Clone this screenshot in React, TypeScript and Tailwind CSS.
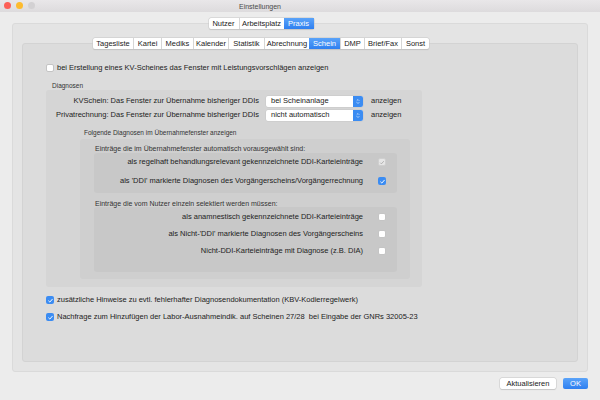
import React from 'react';

const FONT = { fontFamily: '"Liberation Sans", Arial, sans-serif' };

const Box = ({ checked, disabled }: { checked?: boolean; disabled?: boolean }) => {
  if (!checked) {
    return <div className="w-[8px] h-[8px] shrink-0 rounded-[2px] bg-white border border-[#c4c4c4]" />;
  }
  return (
    <div
      className={`w-[8px] h-[8px] shrink-0 rounded-[2px] flex items-center justify-center ${
        disabled ? 'bg-[#e6e6e6] border border-[#cfcfcf]' : 'bg-[#3b8cf2]'
      }`}
    >
      <svg viewBox="0 0 8 8" className="w-[7px] h-[7px]">
        <path d="M1.6 4.2 L3.2 5.8 L6.4 2.2" fill="none" stroke={disabled ? '#a8a8a8' : '#ffffff'} strokeWidth="1.1" />
      </svg>
    </div>
  );
};

const Select = ({ value }: { value: string }) => (
  <div className="w-[97px] h-[11px] bg-white rounded-[2px] shadow-[0_0_0_0.5px_#c8c8c8] flex items-center">
    <span className="flex-1 pl-[5px] text-[7.5px] text-[#222] leading-none">{value}</span>
    <div className="w-[10px] h-[11px] rounded-r-[2px] bg-[#3b8cf2] flex items-center justify-center">
      <svg viewBox="0 0 6 9" className="w-[4px] h-[7px]">
        <path d="M1 3.5 L3 1.5 L5 3.5 M1 5.5 L3 7.5 L5 5.5" fill="none" stroke="#fff" strokeWidth="0.9" />
      </svg>
    </div>
  </div>
);

const Tabs = ({ items, active }: { items: [string, number][]; active: string }) => (
  <div className="flex h-[11px] bg-white rounded-[2px] shadow-[0_0_0_0.5px_#c9c9c9,0_0.5px_1px_rgba(0,0,0,0.15)]">
    {items.map(([label, w], i) => (
      <div
        key={label}
        style={{ width: w }}
        className={`flex items-center justify-center text-[7.5px] leading-none ${
          label === active
            ? 'bg-gradient-to-b from-[#5aa3f9] to-[#2e7ff0] text-white'
            : 'text-[#222]'
        } ${i > 0 && label !== active ? 'border-l border-[#d6d6d6]' : ''}`}
      >
        {label}
      </div>
    ))}
  </div>
);

const SubRow = ({ label, checked, disabled }: { label: string; checked?: boolean; disabled?: boolean }) => (
  <div className="h-[12px] flex items-center justify-end pr-[11px] gap-[15px]">
    <span className="text-[7.5px] text-[#222] leading-none">{label}</span>
    <Box checked={checked} disabled={disabled} />
  </div>
);

export default function App() {
  return (
    <div className="w-[600px] h-[400px] bg-[#ececec] flex flex-col overflow-hidden" style={FONT}>
      {/* title bar */}
      <div className="h-[12px] shrink-0 bg-gradient-to-b from-[#e9e7e9] to-[#dddbdd] relative flex items-center justify-center pr-[80px]">
        <div className="absolute left-[4px] top-[2px] flex gap-[5px]">
          <div className="w-[7px] h-[7px] rounded-full bg-[#fc5f57]" />
          <div className="w-[7px] h-[7px] rounded-full bg-[#fdbb2e]" />
          <div className="w-[7px] h-[7px] rounded-full bg-[#d3d1d3]" />
        </div>
        <span className="text-[7px] text-[#4a4a4a] leading-none">Einstellungen</span>
      </div>

      <div className="px-[12px] pt-[6px] flex flex-col">
        <div className="flex justify-center pr-[78px] relative z-10">
          <Tabs items={[['Nutzer', 30], ['Arbeitsplatz', 45], ['Praxis', 30]]} active="Praxis" />
        </div>

        {/* outer panel */}
        <div className="-mt-[6px] h-[349px] bg-[#e4e4e4] border border-[#dadada] rounded-[3px] px-[9px] pt-[14px]">
          <div className="flex justify-center pr-[78px] relative z-10">
            <Tabs
              items={[
                ['Tagesliste', 40],
                ['Kartei', 28],
                ['Mediks', 32],
                ['Kalender', 35],
                ['Statistik', 36],
                ['Abrechnung', 45],
                ['Schein', 31],
                ['DMP', 24],
                ['Brief/Fax', 37],
                ['Sonst', 28],
              ]}
              active="Schein"
            />
          </div>

          {/* inner panel */}
          <div className="-mt-[6px] h-[319px] bg-[#dcdcdc] border border-[#d3d3d3] rounded-[3px] pl-[23px] pt-[19px]">
            <div className="h-[10px] flex items-center gap-[3px]">
              <Box />
              <span className="text-[7.5px] text-[#222] leading-none">
                bei Erstellung eines KV-Scheines das Fenster mit Leistungsvorschlägen anzeigen
              </span>
            </div>

            <div className="mt-[9px] h-[8px] flex items-center pl-[6px] text-[6.5px] text-[#333] leading-none">
              Diagnosen
            </div>

            {/* Diagnosen box */}
            <div className="w-[376px] bg-[#d5d5d5] rounded-[3px] pt-[5px] pb-[8px]">
              <div className="flex flex-col gap-[2px]">
                <div className="h-[12px] flex items-center">
                  <span className="w-[213px] text-right text-[7.5px] text-[#222] leading-none whitespace-nowrap">
                    KVSchein: Das Fenster zur Übernahme bisheriger DDIs
                  </span>
                  <div className="ml-[7px]">
                    <Select value="bei Scheinanlage" />
                  </div>
                  <span className="ml-[8px] text-[7.5px] text-[#222] leading-none">anzeigen</span>
                </div>
                <div className="h-[12px] flex items-center">
                  <span className="w-[213px] text-right text-[7.5px] text-[#222] leading-none whitespace-nowrap">
                    Privatrechnung: Das Fenster zur Übernahme bisheriger DDIs
                  </span>
                  <div className="ml-[7px]">
                    <Select value="nicht automatisch" />
                  </div>
                  <span className="ml-[8px] text-[7.5px] text-[#222] leading-none">anzeigen</span>
                </div>
              </div>

              <div className="mt-[8px] ml-[38px] h-[8px] flex items-center text-[6.5px] text-[#333] leading-none">
                Folgende Diagnosen im Übernahmefenster anzeigen
              </div>

              {/* Folgende box */}
              <div className="mt-[2px] ml-[34px] w-[330px] bg-[#cfcfcf] rounded-[3px] pt-[5px] pb-[7px] pl-[14px] pr-[13px]">
                <div className="h-[8px] flex items-center pl-[1px] text-[7px] text-[#333] leading-none">
                  Einträge die im Übernahmefenster automatisch vorausgewählt sind:
                </div>
                <div className="mt-[1px] bg-[#c8c8c8] rounded-[3px] pt-[3px] pb-[6px] flex flex-col gap-[7px]">
                  <SubRow label="als regelhaft behandlungsrelevant gekennzeichnete DDI-Karteieinträge" checked disabled />
                  <SubRow label="als 'DDI' markierte Diagnosen des Vorgängerscheins/Vorgängerrechnung" checked />
                </div>

                <div className="mt-[6px] h-[8px] flex items-center pl-[1px] text-[7px] text-[#333] leading-none">
                  Einträge die vom Nutzer einzeln selektiert werden müssen:
                </div>
                <div className="bg-[#c8c8c8] rounded-[3px] pt-[4px] pb-[15px] flex flex-col gap-[5px]">
                  <SubRow label="als anamnestisch gekennzeichnete DDI-Karteieinträge" />
                  <SubRow label="als Nicht-'DDI' markierte Diagnosen des Vorgängerscheins" />
                  <SubRow label="Nicht-DDI-Karteieinträge mit Diagnose (z.B. DIA)" />
                </div>
              </div>
            </div>

            <div className="mt-[8px] flex flex-col gap-[7px]">
              <div className="h-[10px] flex items-center gap-[3px]">
                <Box checked />
                <span className="text-[7.5px] text-[#222] leading-none">
                  zusätzliche Hinweise zu evtl. fehlerhafter Diagnosendokumentation (KBV-Kodierregelwerk)
                </span>
              </div>
              <div className="h-[10px] flex items-center gap-[3px]">
                <Box checked />
                <span className="text-[7.5px] text-[#222] leading-none whitespace-pre">
                  Nachfrage zum Hinzufügen der Labor-Ausnahmeindik. auf Scheinen 27/28  bei Eingabe der GNRs 32005-23
                </span>
              </div>
            </div>
          </div>
        </div>

        {/* buttons */}
        <div className="mt-[6px] flex justify-end gap-[7px]">
          <div className="w-[56px] h-[11px] bg-white rounded-[2px] shadow-[0_0_0_0.5px_#c8c8c8,0_0.5px_1px_rgba(0,0,0,0.15)] flex items-center justify-center text-[7.5px] text-[#222] leading-none">
            Aktualisieren
          </div>
          <div className="w-[25px] h-[11px] rounded-[2px] bg-gradient-to-b from-[#5aa3f9] to-[#2e7ff0] flex items-center justify-center text-[7.5px] text-white leading-none">
            OK
          </div>
        </div>
      </div>
    </div>
  );
}
